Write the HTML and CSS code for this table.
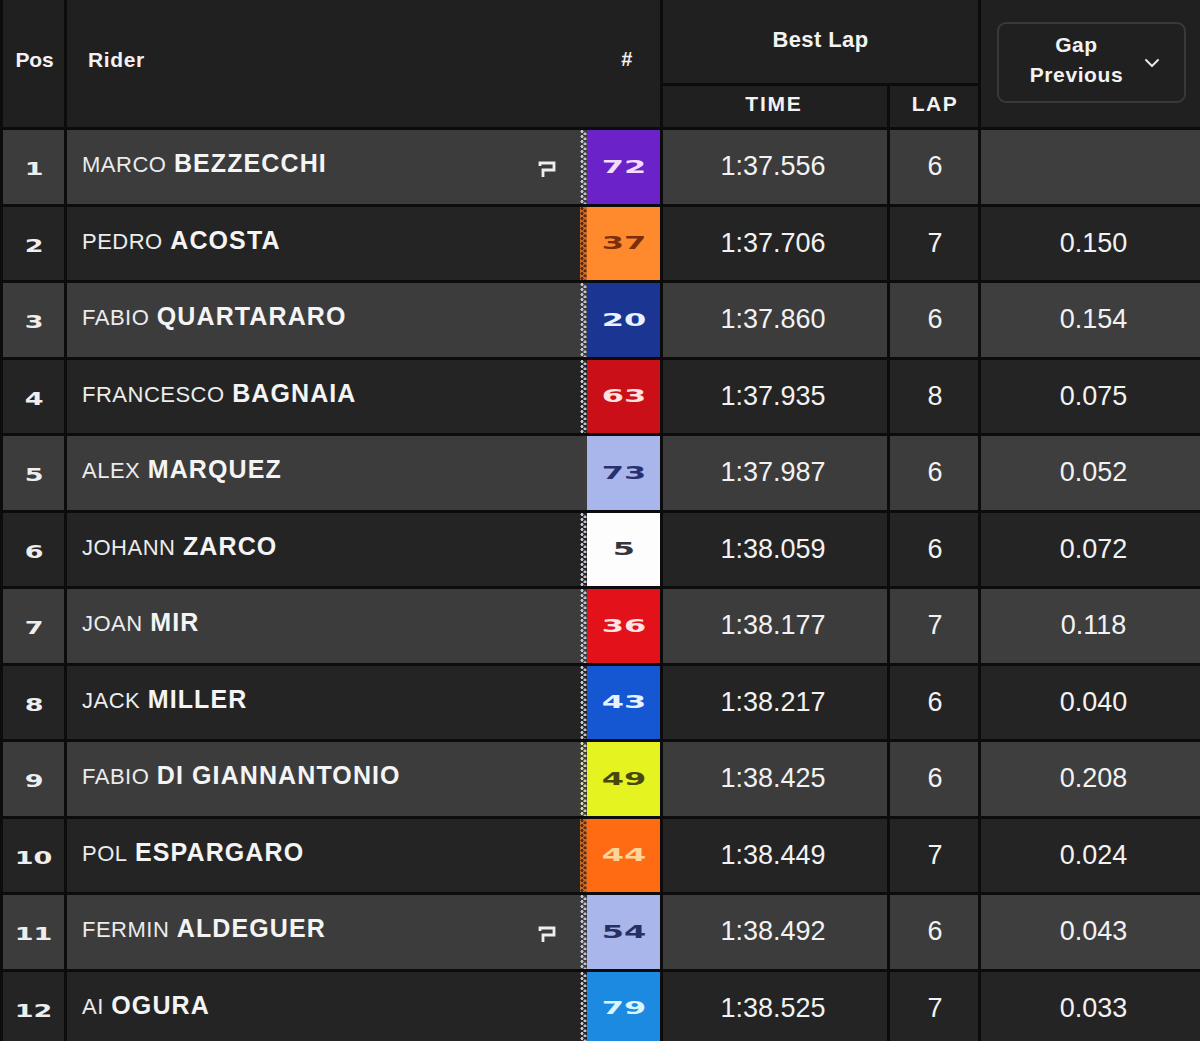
FILE: index.html
```html
<!DOCTYPE html>
<html lang="en">
<head>
<meta charset="utf-8">
<title>Best Lap</title>
<link rel="stylesheet" href="styles.css">
</head>
<body>
<div class="board">
  <div class="h h-pos">Pos</div>
  <div class="h h-rider"><span>Rider</span><span class="hash">#</span></div>
  <div class="h h-best">Best Lap</div>
  <div class="h h-time">TIME</div>
  <div class="h h-lap">LAP</div>
  <div class="h h-gap">
    <div class="select">
      <span class="sel-text">Gap<br>Previous</span>
      <svg class="chev" width="16" height="10" viewBox="0 0 16 10"><polyline points="2,2 8,8 14,2" fill="none" stroke="#e6e6e6" stroke-width="2" stroke-linecap="round" stroke-linejoin="round"/></svg>
    </div>
  </div>

  <div class="row odd"><div class="c pos"><span class="sq">1</span></div><div class="c rider"><span class="name"><span class="fn">MARCO</span> <span class="ln">BEZZECCHI</span></span><svg class="pflag" width="20" height="18" viewBox="0 0 20 18"><path d="M3 5 V2 H17 V9 H6 V16" fill="none" stroke="#eee" stroke-width="2.8"/></svg><span class="stripe s-light"></span><span class="num n72"><span class="sq">72</span></span></div><div class="c time">1:37.556</div><div class="c lap">6</div><div class="c gap"></div></div>

  <div class="row even"><div class="c pos"><span class="sq">2</span></div><div class="c rider"><span class="name"><span class="fn">PEDRO</span> <span class="ln">ACOSTA</span></span><span class="stripe s-orange"></span><span class="num n37"><span class="sq">37</span></span></div><div class="c time">1:37.706</div><div class="c lap">7</div><div class="c gap">0.150</div></div>

  <div class="row odd"><div class="c pos"><span class="sq">3</span></div><div class="c rider"><span class="name"><span class="fn">FABIO</span> <span class="ln">QUARTARARO</span></span><span class="stripe s-light"></span><span class="num n20"><span class="sq">20</span></span></div><div class="c time">1:37.860</div><div class="c lap">6</div><div class="c gap">0.154</div></div>

  <div class="row even"><div class="c pos"><span class="sq">4</span></div><div class="c rider"><span class="name"><span class="fn">FRANCESCO</span> <span class="ln">BAGNAIA</span></span><span class="stripe s-light"></span><span class="num n63"><span class="sq">63</span></span></div><div class="c time">1:37.935</div><div class="c lap">8</div><div class="c gap">0.075</div></div>

  <div class="row odd"><div class="c pos"><span class="sq">5</span></div><div class="c rider"><span class="name"><span class="fn">ALEX</span> <span class="ln">MARQUEZ</span></span><span class="stripe s-none"></span><span class="num n73"><span class="sq">73</span></span></div><div class="c time">1:37.987</div><div class="c lap">6</div><div class="c gap">0.052</div></div>

  <div class="row even"><div class="c pos"><span class="sq">6</span></div><div class="c rider"><span class="name"><span class="fn">JOHANN</span> <span class="ln">ZARCO</span></span><span class="stripe s-light"></span><span class="num n5"><span class="sq">5</span></span></div><div class="c time">1:38.059</div><div class="c lap">6</div><div class="c gap">0.072</div></div>

  <div class="row odd"><div class="c pos"><span class="sq">7</span></div><div class="c rider"><span class="name"><span class="fn">JOAN</span> <span class="ln">MIR</span></span><span class="stripe s-light"></span><span class="num n36"><span class="sq">36</span></span></div><div class="c time">1:38.177</div><div class="c lap">7</div><div class="c gap">0.118</div></div>

  <div class="row even"><div class="c pos"><span class="sq">8</span></div><div class="c rider"><span class="name"><span class="fn">JACK</span> <span class="ln">MILLER</span></span><span class="stripe s-light"></span><span class="num n43"><span class="sq">43</span></span></div><div class="c time">1:38.217</div><div class="c lap">6</div><div class="c gap">0.040</div></div>

  <div class="row odd"><div class="c pos"><span class="sq">9</span></div><div class="c rider"><span class="name"><span class="fn">FABIO</span> <span class="ln">DI GIANNANTONIO</span></span><span class="stripe s-olive"></span><span class="num n49"><span class="sq">49</span></span></div><div class="c time">1:38.425</div><div class="c lap">6</div><div class="c gap">0.208</div></div>

  <div class="row even"><div class="c pos"><span class="sq">10</span></div><div class="c rider"><span class="name"><span class="fn">POL</span> <span class="ln">ESPARGARO</span></span><span class="stripe s-orange"></span><span class="num n44"><span class="sq">44</span></span></div><div class="c time">1:38.449</div><div class="c lap">7</div><div class="c gap">0.024</div></div>

  <div class="row odd"><div class="c pos"><span class="sq">11</span></div><div class="c rider"><span class="name"><span class="fn">FERMIN</span> <span class="ln">ALDEGUER</span></span><svg class="pflag" width="20" height="18" viewBox="0 0 20 18"><path d="M3 5 V2 H17 V9 H6 V16" fill="none" stroke="#eee" stroke-width="2.8"/></svg><span class="stripe s-light"></span><span class="num n54"><span class="sq">54</span></span></div><div class="c time">1:38.492</div><div class="c lap">6</div><div class="c gap">0.043</div></div>

  <div class="row even"><div class="c pos"><span class="sq">12</span></div><div class="c rider"><span class="name"><span class="fn">AI</span> <span class="ln">OGURA</span></span><span class="stripe s-light"></span><span class="num n79"><span class="sq">79</span></span></div><div class="c time">1:38.525</div><div class="c lap">7</div><div class="c gap">0.033</div></div>
</div>
</body>
</html>
```
FILE: styles.css
```css
html, body {
  margin: 0;
  padding: 0;
  background: #0c0c0c;
  overflow: hidden;
}
body {
  font-family: "Liberation Sans", Arial, sans-serif;
  color: #f2f2f2;
}
.board {
  display: grid;
  grid-template-columns: 61px 593px 224px 88px 219px;
  grid-template-rows: 83px 41px repeat(12, 73.5px);
  column-gap: 3px;
  row-gap: 3px;
  padding-left: 3px;
  width: 1200px;
  box-sizing: border-box;
  background: #0c0c0c;
}
.h {
  background: #202020;
  font-weight: bold;
  font-size: 21px;
  display: flex;
  align-items: center;
  letter-spacing: -0.2px;
}
.h-pos {
  grid-column: 1;
  grid-row: 1 / span 2;
  justify-content: center;
  padding-bottom: 8px;
  padding-left: 2px;
}
.h-rider {
  grid-column: 2;
  grid-row: 1 / span 2;
  justify-content: space-between;
  padding: 0 27px 8px 21px;
  letter-spacing: 0.6px;
}
.hash { font-size: 20px; }
.h-best {
  grid-column: 3 / span 2;
  grid-row: 1;
  justify-content: center;
  align-items: flex-start;
  padding-top: 27px;
  box-sizing: border-box;
  font-size: 22px;
  letter-spacing: 0.4px;
}
.h-time {
  grid-column: 3;
  grid-row: 2;
  justify-content: center;
  font-size: 21px;
  letter-spacing: 1.8px;
  padding-right: 2px;
  padding-bottom: 6px;
}
.h-lap {
  grid-column: 4;
  grid-row: 2;
  justify-content: center;
  font-size: 21px;
  letter-spacing: 1.5px;
  padding-left: 2px;
  padding-bottom: 6px;
}
.h-gap {
  grid-column: 5;
  grid-row: 1 / span 2;
  padding: 22px 14px 24px 16px;
  align-items: stretch;
}
.select {
  flex: 1;
  border: 2px solid #393939;
  border-radius: 9px;
  display: flex;
  align-items: center;
  justify-content: center;
  position: relative;
  padding-right: 30px;
  padding-bottom: 5px;
}
.sel-text {
  text-align: center;
  line-height: 30px;
  font-size: 21px;
  letter-spacing: 0.6px;
}
.chev {
  position: absolute;
  right: 24px;
  top: 34px;
}

.row { display: contents; }
.c {
  display: flex;
  align-items: center;
  font-size: 27px;
}
.odd .c { background: #3c3c3c; }
.even .c { background: #242424; }
.odd .gap { background: #3e3e3e; }

.sq {
  display: inline-block;
  font-family: "DejaVu Sans", sans-serif;
  font-weight: bold;
  font-size: 18px;
  transform: scaleX(1.5);
}
.pos {
  justify-content: center;
  padding-left: 1px;
  color: #eeeeee;
}
.pos .sq { margin-top: 4px; }

.rider {
  padding-left: 15px;
  padding-right: 0;
}
.name {
  flex: 1;
  white-space: nowrap;
  margin-top: -6px;
}
.fn {
  font-size: 22px;
  letter-spacing: 0.5px;
  font-weight: normal;
  color: #ececec;
}
.ln {
  font-size: 25px;
  font-weight: bold;
  letter-spacing: 1.1px;
  color: #f4f4f4;
}
.pflag {
  margin-right: 23px;
  margin-top: 6px;
}
.stripe {
  align-self: stretch;
  width: 7px;
  background-image:
    radial-gradient(circle at 2px 1.5px, var(--dot) 1.3px, transparent 1.8px),
    radial-gradient(circle at 5px 4px, var(--dot) 1.3px, transparent 1.8px);
  background-size: 7px 5px;
}
.s-light { --dot: #c2c2d2; }
.s-orange { --dot: #5a2a10; background-color: #c76a26; }
.s-olive { --dot: #d0d4a0; }
.s-none { --dot: transparent; }

.num {
  align-self: stretch;
  width: 73px;
  display: flex;
  align-items: center;
  justify-content: center;
}
.num .sq { font-size: 20px; transform: scale(1.6, 0.9); letter-spacing: 0; }
.n72 { background: #6b22c9; color: #f3dcff; }
.n37 { background: #ff8a2d; color: #7a2e0b; }
.n20 { background: #1b3592; color: #eaf1ff; }
.n63 { background: #cb0f18; color: #ffe2e2; }
.n73 { background: #a9b6ec; color: #28316e; }
.n5  { background: #fdfdfd; color: #35353d; }
.n36 { background: #e2111a; color: #ffe6e6; }
.n43 { background: #1556d3; color: #e6f3ff; }
.n49 { background: #e5f321; color: #474710; }
.n44 { background: #ff6b12; color: #ffd49a; }
.n54 { background: #a9b6ec; color: #283061; }
.n79 { background: #1b8ae0; color: #d9f6ff; }

.time {
  justify-content: center;
  padding-right: 4px;
}
.lap {
  justify-content: center;
  padding-left: 2px;
}
.gap {
  justify-content: center;
  padding-left: 6px;
}
```
